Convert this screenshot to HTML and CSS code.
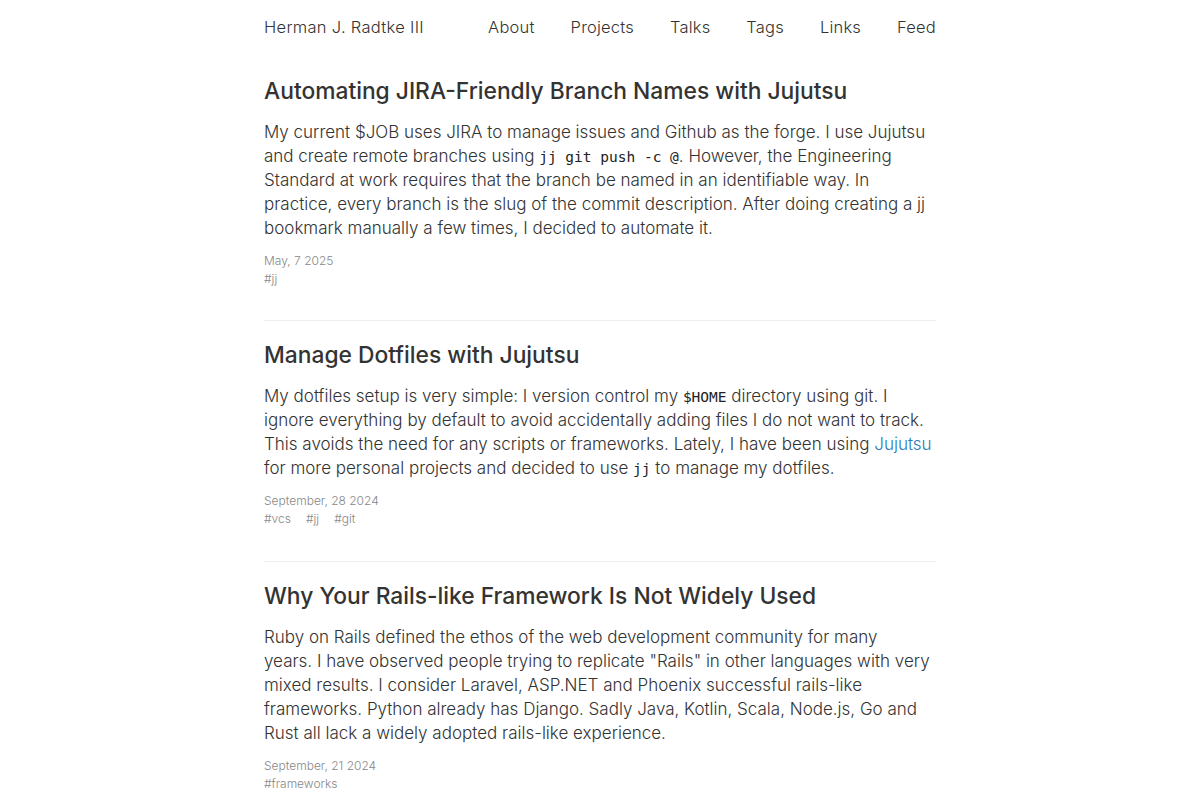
FILE: index.html
```html
<!DOCTYPE html>
<html lang="en">
<head>
<meta charset="utf-8">
<title>Herman J. Radtke III</title>
<link rel="stylesheet" href="styles.css">
</head>
<body>
<div class="page">
  <header class="site-header">
    <a class="site-name" href="#">Herman J. Radtke III</a>
    <nav class="nav">
      <a href="#">About</a>
      <a href="#">Projects</a>
      <a href="#">Talks</a>
      <a href="#">Tags</a>
      <a href="#">Links</a>
      <a href="#">Feed</a>
    </nav>
  </header>
  <main>
    <article class="post">
      <h2 class="post-title">Automating JIRA-Friendly Branch Names with Jujutsu</h2>
      <p class="post-summary">My current $JOB uses JIRA to manage issues and Github as the forge. I use Jujutsu and create remote branches using <code>jj git push -c @</code>. However, the Engineering Standard at work requires that the branch be named in an identifiable way. In practice, every branch is the slug of the commit description. After doing creating a jj bookmark manually a few times, I decided to automate it.</p>
      <div class="post-date">May, 7 2025</div>
      <div class="post-tags"><a href="#">#jj</a></div>
    </article>
    <article class="post">
      <h2 class="post-title">Manage Dotfiles with Jujutsu</h2>
      <p class="post-summary">My dotfiles setup is very simple: I version control my <code>$HOME</code> directory using git. I ignore everything by default to avoid accidentally adding files I do not want to track. This avoids the need for any scripts or frameworks. Lately, I have been using <a class="link" href="#">Jujutsu</a> for more personal projects and decided to use <code>jj</code> to manage my dotfiles.</p>
      <div class="post-date">September, 28 2024</div>
      <div class="post-tags"><a href="#">#vcs</a><a href="#">#jj</a><a href="#">#git</a></div>
    </article>
    <article class="post">
      <h2 class="post-title">Why Your Rails-like Framework Is Not Widely Used</h2>
      <p class="post-summary">Ruby on Rails defined the ethos of the web development community for many<br>years. I have observed people trying to replicate "Rails" in other languages with very mixed results. I consider Laravel, ASP.NET and Phoenix successful rails-like frameworks. Python already has Django. Sadly Java, Kotlin, Scala, Node.js, Go and Rust all lack a widely adopted rails-like experience.</p>
      <div class="post-date">September, 21 2024</div>
      <div class="post-tags"><a href="#">#frameworks</a></div>
    </article>
  </main>
</div>
</body>
</html>
```

FILE: styles.css
```css
* { box-sizing: border-box; }
body {
  margin: 0;
  background: #fff;
  color: #333;
  font-family: "Inter", "Liberation Sans", sans-serif;
}
a { color: inherit; text-decoration: none; }
.page {
  width: 672px;
  margin: 0 auto;
}
.site-header {
  height: 54px;
  display: flex;
  align-items: center;
  justify-content: space-between;
  font-size: 16.5px;
  font-weight: 300;
}
.site-name { letter-spacing: 0.3px; }
.nav {
  display: flex;
  gap: 36px;
}
.nav a { letter-spacing: 0.2px; }
.post {
  padding-top: 23px;
  padding-bottom: 32px;
  border-bottom: 1px solid #eee;
}
.post + .post { padding-top: 20px; padding-bottom: 33px; }
.post-title {
  margin: 0 0 15px;
  font-size: 22.8px;
  line-height: 28px;
  font-weight: 500;
  color: #333;
}
.post-summary {
  margin: 0 0 12px;
  font-size: 17px;
  line-height: 24px;
  font-weight: 300;
}
code {
  font-family: "DejaVu Sans Mono", monospace;
  font-size: 14.5px;
  line-height: 1;
  font-weight: 400;
  color: #222;
}
.link { color: #2b7bb9; }
.post-date, .post-tags {
  font-size: 12px;
  line-height: 18px;
  color: #888;
  font-weight: 300;
}
.post-tags {
  display: flex;
  gap: 15px;
}
```
